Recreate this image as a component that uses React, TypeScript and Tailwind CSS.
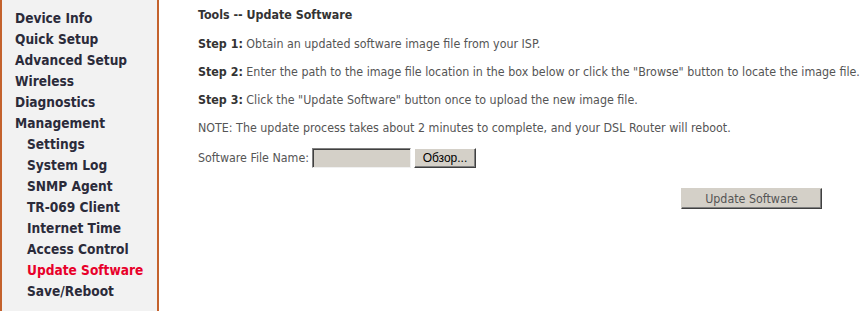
const menu: { label: string; sub?: boolean; active?: boolean }[] = [
  { label: "Device Info" },
  { label: "Quick Setup" },
  { label: "Advanced Setup" },
  { label: "Wireless" },
  { label: "Diagnostics" },
  { label: "Management" },
  { label: "Settings", sub: true },
  { label: "System Log", sub: true },
  { label: "SNMP Agent", sub: true },
  { label: "TR-069 Client", sub: true },
  { label: "Internet Time", sub: true },
  { label: "Access Control", sub: true },
  { label: "Update Software", sub: true, active: true },
  { label: "Save/Reboot", sub: true },
];

const font = "font-['DejaVu_Sans_Condensed','Liberation_Sans',sans-serif]";

export default function App() {
  return (
    <div className={`flex w-[865px] h-[311px] bg-white overflow-hidden ${font}`}>
      {/* Sidebar */}
      <aside className="w-[159px] shrink-0 h-full bg-[#f2f2f2] border-l-2 border-r-2 border-[#c4622d] pt-[8px]">
        {menu.map((m) => (
          <div
            key={m.label}
            className={`h-[21px] leading-[21px] text-[13.6px] font-bold whitespace-nowrap ${
              m.sub ? "pl-[25px]" : "pl-[13px]"
            } ${m.active ? "text-[#e8002a]" : "text-[#2b2b3a]"}`}
          >
            {m.label}
          </div>
        ))}
      </aside>

      {/* Main content */}
      <main className="flex-1 pl-[39px] pt-[7px] text-[12.35px] leading-[16px] text-[#555]">
        <div className="font-bold text-[#333]">Tools -- Update Software</div>

        <p className="mt-[13px] whitespace-nowrap">
          <b className="text-[#333]">Step 1:</b> Obtain an updated software image file from your ISP.
        </p>
        <p className="mt-[12px] whitespace-nowrap">
          <b className="text-[#333]">Step 2:</b> Enter the path to the image file location in the box below or click the "Browse" button to locate the image file.
        </p>
        <p className="mt-[12px] whitespace-nowrap">
          <b className="text-[#333]">Step 3:</b> Click the "Update Software" button once to upload the new image file.
        </p>
        <p className="mt-[12px] whitespace-nowrap">
          NOTE: The update process takes about 2 minutes to complete, and your DSL Router will reboot.
        </p>

        <div className="mt-[12px] flex items-center h-[20px]">
          <span>Software File Name:</span>
          <div className="ml-[3px] w-[99px] h-[20px] bg-[#d4d0c8] border border-t-[#808080] border-l-[#808080] border-b-[#f0f0f0] border-r-[#f0f0f0] shadow-[inset_1px_1px_0_#404040]" />
          <button className="ml-[3px] w-[62px] h-[20px] bg-[#d4d0c8] text-black text-[12px] font-['Liberation_Sans',sans-serif] border border-t-white border-l-white border-b-[#404040] border-r-[#404040] shadow-[inset_-1px_-1px_0_#808080]">
            Обзор...
          </button>
        </div>

        <div className="mt-[20px] w-[624px] flex justify-end">
          <button className="w-[141px] h-[21px] bg-[#d4d0c8] text-[#555] text-[12.35px] border border-t-[#d4d0c8] border-l-[#d4d0c8] border-b-[#404040] border-r-[#404040] shadow-[inset_-1px_-1px_0_#808080]">
            Update Software
          </button>
        </div>
      </main>
    </div>
  );
}
